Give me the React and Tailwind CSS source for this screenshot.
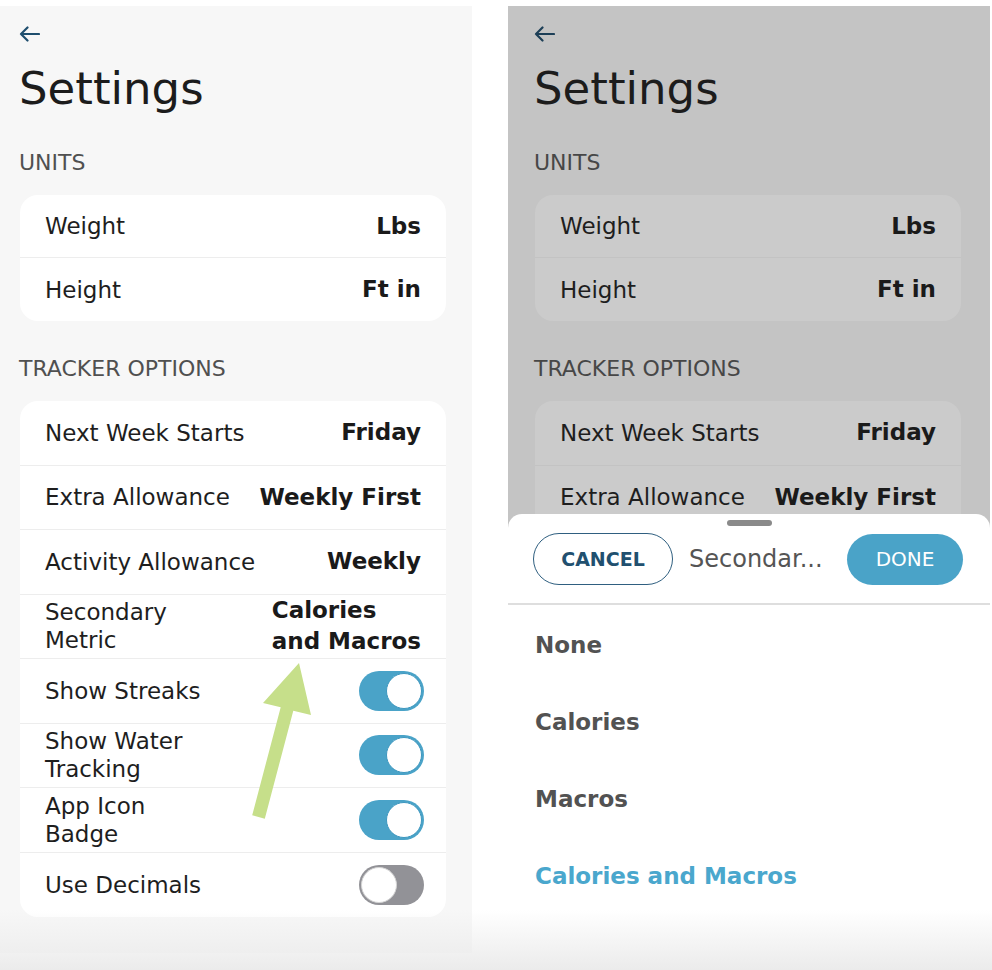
import { useState } from 'react';

const font = { fontFamily: '"DejaVu Sans", "Noto Sans", sans-serif' };

function BackArrow({ color }) {
  return (
    <svg width="21" height="16" viewBox="0 0 21 16" fill="none">
      <path
        d="M20 8H2 M8.5 1.5 L2 8 L8.5 14.5"
        stroke={color}
        strokeWidth="2.2"
        strokeLinecap="round"
        strokeLinejoin="round"
      />
    </svg>
  );
}

function Toggle({ on }) {
  return (
    <div
      className={`w-[65px] h-[40px] rounded-full p-[2px] flex ${
        on ? 'bg-[#4aa3c8] justify-end' : 'bg-[#929297] justify-start'
      }`}
    >
      <div
        className={`w-[36px] h-[36px] rounded-full bg-white ${
          on ? 'border border-[#3d97bf]' : 'border border-[#d4d4d4]'
        }`}
      />
    </div>
  );
}

const tracker = [
  { label: ['Next Week Starts'], value: ['Friday'] },
  { label: ['Extra Allowance'], value: ['Weekly First'] },
  { label: ['Activity Allowance'], value: ['Weekly'] },
  { label: ['Secondary', 'Metric'], value: ['Calories', 'and Macros'] },
  { label: ['Show Streaks'], toggle: true },
  { label: ['Show Water', 'Tracking'], toggle: true },
  { label: ['App Icon', 'Badge'], toggle: true },
  { label: ['Use Decimals'], toggle: false },
];

function Row({ item, dim, last, h }) {
  return (
    <div
      className={`flex items-center justify-between pl-[25px] pr-[22px] ${h} ${
        last ? '' : dim ? 'border-b border-[#c3c3c3]' : 'border-b border-[#ededed]'
      }`}
    >
      <div className="text-[23px] leading-[28px] text-[#1e1e1e]">
        {item.label.map((l) => (
          <div key={l}>{l}</div>
        ))}
      </div>
      {'toggle' in item ? (
        <Toggle on={item.toggle} />
      ) : (
        <div className="text-[23px] leading-[31px] font-bold text-[#1a1a1a] pr-[3px]">
          {item.value.map((v) => (
            <div key={v}>{v}</div>
          ))}
        </div>
      )}
    </div>
  );
}

function SettingsScreen({ dim }) {
  const card = dim ? 'bg-[#cbcbcb]' : 'bg-white';
  const head = dim ? 'text-[#474747]' : 'text-[#505050]';
  // the dimmed copy only shows the rows that sit above the sheet
  const rows = dim ? tracker.slice(0, 2) : tracker;
  return (
    <div className={dim ? 'pl-[26px]' : 'pl-[19px]'}>
      <div className="pt-[20px] h-[48px]">
        <BackArrow color={dim ? '#1d3f57' : '#1f4e6e'} />
      </div>
      <h1 className="mt-[9px] text-[45px] leading-[52px] text-[#1c1c1c] font-normal">
        Settings
      </h1>
      <div className={`mt-[36px] text-[22px] leading-[24px] ${head}`}>UNITS</div>
      <div className={`mt-[20px] ml-[1px] w-[426px] rounded-[18px] overflow-hidden ${card}`}>
        <Row item={{ label: ['Weight'], value: ['Lbs'] }} dim={dim} h="h-[63px]" />
        <Row item={{ label: ['Height'], value: ['Ft in'] }} dim={dim} last h="h-[63px]" />
      </div>
      <div className={`mt-[36px] text-[22px] leading-[24px] ${head}`}>TRACKER OPTIONS</div>
      <div
        className={`mt-[20px] ml-[1px] w-[426px] rounded-[18px] overflow-hidden ${card} ${
          dim ? 'h-[300px]' : ''
        }`}
      >
        {rows.map((t, i) => (
          <Row key={i} item={t} dim={dim} last={i === tracker.length - 1} h="h-[64.5px]" />
        ))}
      </div>
    </div>
  );
}

function Sheet() {
  const [selected] = useState('Calories and Macros');
  const options = ['None', 'Calories', 'Macros', 'Calories and Macros'];
  return (
    <div className="absolute left-0 right-0 top-[508px] bottom-0 bg-white rounded-t-[14px]">
      <div className="flex justify-center pt-[6px]">
        <div className="w-[45px] h-[6px] rounded-full bg-[#8a8a8a]" />
      </div>
      <div className="flex items-center pl-[25px] pr-[27px] mt-[7px] h-[52px]">
        <button className="w-[140px] h-[52px] rounded-full border-[1.5px] border-[#2f5f80] text-[#21506f] text-[19px] font-bold">
          CANCEL
        </button>
        <div className="flex-1 pl-[16px] text-[24px] text-[#555555]">Secondar...</div>
        <button className="w-[116px] h-[51px] rounded-full bg-[#4aa3c8] text-white text-[20px]">
          DONE
        </button>
      </div>
      <div className="mt-[18px] h-[2px] bg-[#dedede]" />
      <div className="pl-[27px] pt-[18px]">
        {options.map((o) => (
          <div
            key={o}
            className={`h-[77px] text-[23px] leading-[44px] font-bold ${
              o === selected ? 'text-[#4aa7cd]' : 'text-[#525252]'
            }`}
          >
            {o}
          </div>
        ))}
      </div>
    </div>
  );
}

export default function App() {
  return (
    <div className="relative w-[992px] h-[970px] bg-white overflow-hidden flex" style={font}>
      <div className="mt-[6px] w-[472px] h-[947px] bg-[#f7f7f7]">
        <SettingsScreen />
      </div>
      <div className="relative mt-[6px] ml-[36px] w-[482px] h-[964px] bg-[#c4c4c4] overflow-hidden">
        <SettingsScreen dim />
        <Sheet />
      </div>

      {/* green pointer arrow drawn over the screenshot */}
      <svg
        className="absolute top-0 left-0 pointer-events-none"
        width="992"
        height="970"
        viewBox="0 0 992 970"
      >
        <polygon
          points="299,663 311,715 293.3,710.7 264.8,818.7 252.2,815.3 280.7,707.3 263,703"
          fill="#c6df8a"
        />
      </svg>

      <div className="absolute left-0 right-0 bottom-0 h-[60px] bg-gradient-to-b from-transparent to-[#ebebeb] pointer-events-none" />
    </div>
  );
}
